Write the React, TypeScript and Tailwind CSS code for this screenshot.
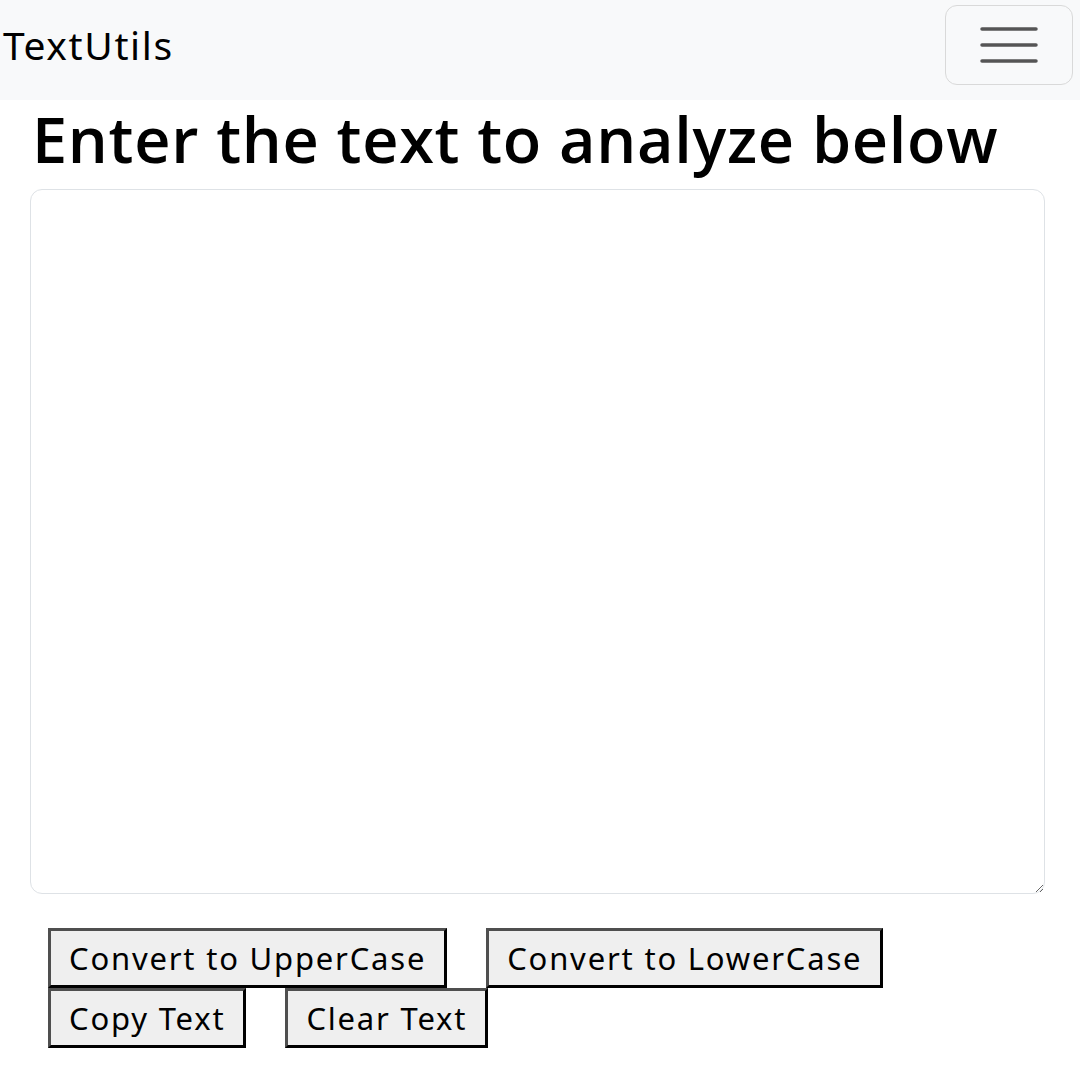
import React, { useState } from "react";

const btnClass =
  "h-[60px] px-[18px] ml-[18px] mr-[21px] bg-[#efefef] text-[31px] leading-none tracking-[1.8px] text-black border-[3px] border-t-[#4f4f4f] border-l-[#4f4f4f] border-b-black border-r-black";

export default function App() {
  const [text, setText] = useState("");

  return (
    <div className="min-h-screen bg-white font-['Noto_Sans',sans-serif]">
      {/* Navbar */}
      <nav className="h-[100px] bg-[#f8f9fa] flex items-start justify-between">
        <a className="mt-[21px] ml-[3px] text-[39px] leading-[48px] tracking-[1.6px] text-black">TextUtils</a>
        <button className="mt-[5px] mr-[7px] w-[128px] h-[80px] rounded-[12px] border-[1.5px] border-[#d9d9d9] flex items-center justify-center">
          <svg width="58" height="40" viewBox="0 0 58 40">
            <g stroke="#555" strokeWidth="3.5" strokeLinecap="round">
              <line x1="2" y1="4" x2="56" y2="4" />
              <line x1="2" y1="20" x2="56" y2="20" />
              <line x1="2" y1="36" x2="56" y2="36" />
            </g>
          </svg>
        </button>
      </nav>

      <div className="px-[30px]">
        <h1 className="ml-[2px] font-['Open_Sans',sans-serif] text-[63px] leading-[78px] font-semibold tracking-[0.7px] text-black">
          Enter the text to analyze below
        </h1>
        <textarea
          value={text}
          onChange={(e) => setText(e.target.value)}
          className="block mt-[11px] w-[1015px] h-[705px] rounded-[12px] border-[1.5px] border-[#dee2e6] outline-none"
        />
        <div className="mt-[34px]">
          <div className="flex">
            <button className={btnClass}>Convert to UpperCase</button>
            <button className={btnClass}>Convert to LowerCase</button>
          </div>
          <div className="flex">
            <button className={btnClass}>Copy Text</button>
            <button className={btnClass}>Clear Text</button>
          </div>
        </div>
      </div>
    </div>
  );
}
